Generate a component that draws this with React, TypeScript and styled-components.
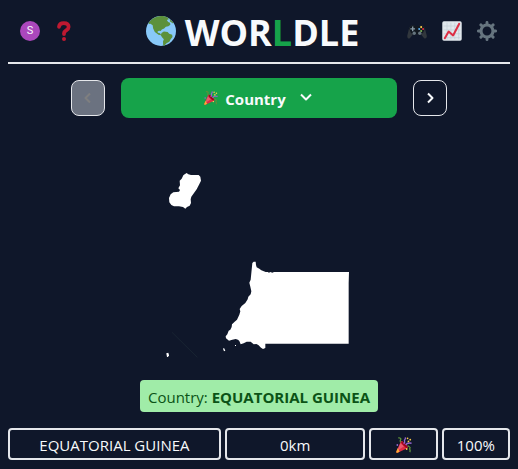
import React from "react";
import styled, { createGlobalStyle } from "styled-components";

const GlobalStyle = createGlobalStyle`
  *, *::before, *::after { box-sizing: border-box; }
  body {
    margin: 0;
    background: #0f172a;
    color: #f8fafc;
    font-family: "Open Sans", "Noto Sans", sans-serif;
    font-size: 15px;
    line-height: 24px;
  }
  button { font: inherit; color: inherit; cursor: pointer; }
`;

const Page = styled.div`
  display: flex;
  flex-direction: column;
  padding: 0 8px;
`;

const Header = styled.header`
  display: flex;
  align-items: center;
  justify-content: space-between;
  height: 64px;
  padding: 0 13px 0 12px;
  border-bottom: 2px solid #e5e7eb;
`;

const Tools = styled.nav<{ $gap: number }>`
  display: flex;
  align-items: center;
  gap: ${(p) => p.$gap}px;
`;

const IconButton = styled.button`
  display: flex;
  padding: 0;
  border: 0;
  background: none;
`;

const Avatar = styled.button`
  width: 20px;
  height: 20px;
  padding: 0;
  border: 0;
  border-radius: 50%;
  background: #ab47bc;
  font-family: Roboto, sans-serif;
  font-size: 11px;
  line-height: 20px;
  text-align: center;
`;

const Title = styled.h1`
  display: flex;
  align-items: center;
  gap: 9px;
  margin: 0 0 0 24px;
  font-size: 36px;
  line-height: 40px;
  font-weight: 700;
`;

const Wordmark = styled.span`
  padding-top: 4px;
`;

const Accent = styled.span`
  color: #16a34a;
`;

const Picker = styled.div`
  display: flex;
  align-items: center;
  align-self: center;
  gap: 16px;
  width: 75%;
  margin-top: 14px;
`;

const StepButton = styled.button`
  display: flex;
  align-items: center;
  justify-content: center;
  width: 34px;
  height: 36px;
  padding: 0;
  border: 1px solid #e5e7eb;
  border-radius: 8px;
  background: transparent;
  &:disabled {
    background: #6b7280;
    color: #7f7f7f;
    cursor: default;
  }
`;

const ModeButton = styled.button`
  display: flex;
  flex: 1;
  align-items: center;
  justify-content: center;
  height: 40px;
  padding: 0;
  border: 0;
  border-radius: 8px;
  background: #16a34a;
  font-weight: 700;
`;

const ModeName = styled.span`
  margin: 2px 12px 0 7px;
`;

const MapArea = styled.main`
  display: flex;
  justify-content: center;
  margin-top: 47px;
`;

const Answer = styled.p`
  align-self: center;
  margin: 15px 0 16px;
  padding: 5px 8px 3px;
  border-radius: 4px;
  background: #a0eca8;
  color: #0b5316;
  strong { font-weight: 700; }
`;

const GuessRow = styled.div`
  display: grid;
  grid-template-columns: repeat(7, 1fr);
  gap: 4px;
`;

const GuessCell = styled.div<{ $span?: number }>`
  display: flex;
  align-items: center;
  justify-content: center;
  grid-column: span ${(p) => p.$span ?? 1};
  height: 32px;
  padding-top: 2px;
  border: 2px solid #e5e7eb;
  border-radius: 4px;
  white-space: nowrap;
`;

const Globe = () => (
  <svg width="30" height="30" viewBox="0 0 36 36" aria-hidden="true">
    <circle cx="18" cy="18" r="18" fill="#88c9f9" />
    <path
      fill="#5c913b"
      d="M3.600 7.400C7 3 12 .4 18 0c3.200 0 6 .7 8.400 2l1 2-2.400.8 1.600 2.400 2.200 1 .4 2.200-2.400 1.800-3 .6-2 2.200-2.800 1.200-1.400 1.800-2-.2-1.800.7.4 1.700 2.600.6 1.600 2.400-3.400-.8-4.400-3.200-2-4.200-.6-4-2.600-1.600-2.400.2z"
    />
    <path
      fill="#5c913b"
      d="M18.600 20.400l2.800-1.800 4.600.6 1.800 2 3.600 1.400.4 2.600-2.200 2.800-1.600 3-3.400 1.800-2.600 3-1.400-.4-.2-4.800 1-2.600-2.200-2.600-1.400-2.400z"
    />
    <path fill="#5c913b" d="M28.200 4l2.800 1.900 2 2.600-1.400.2-2.600-2.300z" />
  </svg>
);

const Question = () => (
  <svg width="20" height="20" viewBox="0 0 36 36" aria-hidden="true">
    <path
      d="M9 10.500C9.500 6 12.500 3.800 17.500 3.800c5.500 0 8.800 2.700 8.800 6.800 0 6.600-8.300 6-8.300 11.600v1.300"
      fill="none"
      stroke="#be1931"
      strokeWidth="6.800"
      strokeLinecap="round"
    />
    <circle cx="18" cy="32.200" r="3.600" fill="#be1931" />
  </svg>
);

const Gamepad = () => (
  <svg width="20" height="20" viewBox="0 0 36 36" aria-hidden="true">
    <path
      fill="#31373d"
      d="M3 16c1-5 3-8 7-8 3 0 4 1 8 1s5-1 8-1c4 0 6 3 7 8l2.500 10c1 5-2.500 7-5 4.500L25 24H11l-5.500 6.500C3 33 0 31 .6 26z"
    />
    <path fill="#111820" d="M4 14c1-4 3-6 6-6 3 0 4 1 8 1s5-1 8-1c3 0 5 2 6 6l-3 7-7 5-4-3-4 3-7-5z" />
    <path fill="#8899a6" d="M9 10h2.500v3h3v2.500h-3v3H9v-3H6V13h3z" />
    <circle cx="13" cy="22" r="3" fill="#66757f" />
    <circle cx="23" cy="22" r="3" fill="#66757f" />
    <circle cx="25.500" cy="11" r="1.900" fill="#ffcc4d" />
    <circle cx="22" cy="14.500" r="1.900" fill="#55acee" />
    <circle cx="29" cy="14.500" r="1.900" fill="#dd2e44" />
    <circle cx="25.500" cy="18" r="1.900" fill="#78b159" />
  </svg>
);

const Chart = () => (
  <svg width="20" height="20" viewBox="0 0 36 36" aria-hidden="true">
    <rect x=".5" y=".5" width="35" height="35" rx="3" fill="#e1e8ed" />
    <path
      fill="none"
      stroke="#c3ced7"
      strokeWidth="1.200"
      d="M3 9h30M3 16h30M3 23h30M3 30h30M9 3v30M16 3v30M23 3v30M30 3v30"
    />
    <path
      d="M5 31l7-12 8 7L31 5"
      fill="none"
      stroke="#dd2e44"
      strokeWidth="3.600"
      strokeLinecap="round"
      strokeLinejoin="round"
    />
  </svg>
);

const Gear = () => (
  <svg width="20" height="20" viewBox="0 0 36 36" aria-hidden="true">
    <circle cx="18" cy="18" r="10.800" fill="none" stroke="#66757f" strokeWidth="5.600" />
    <path
      d="M18 6V2.500M18 33.500V30M6 18H2.500M33.500 18H30M9.500 9.500L7 7M29 29l-2.500-2.500M9.500 26.500L7 29M29 7l-2.500 2.500"
      stroke="#66757f"
      strokeWidth="5.200"
      strokeLinecap="round"
    />
  </svg>
);

const Popper = ({ size }: { size: number }) => (
  <svg width={size} height={size} viewBox="0 0 36 36" aria-hidden="true">
    <path fill="#dd2e44" d="M11 9.500L.8 32.500c-.8 2 .8 3.500 2.700 2.700L26.500 25C29 22 15 7 11 9.500z" />
    <path fill="#ea596e" d="M10 14L3 31l15-10z" />
    <path fill="#a0041e" d="M12 10c4-1 15 10 14 14-2 2-5-1-8-4s-8-8-6-10z" />
    <path fill="#ffac33" d="M4 25L.8 32.500c-.8 2 .8 3.500 2.700 2.700L8 33z" />
    <path
      d="M5 2c5-1 7 2 5 5-1 2-1 3 1 5M26 20c4 0 4 4 7 4M32 24c-4 3 2 5-1 10"
      fill="none"
      stroke="#5c913b"
      strokeWidth="3"
    />
    <path
      d="M17 15c5-2 2-5 2-7s3-2 2-7M22 18c2-5 7-5 13-4"
      fill="none"
      stroke="#9266cc"
      strokeWidth="3"
    />
    <g fill="#ffcc4d">
      <circle cx="26" cy="3" r="2" />
      <circle cx="32" cy="6" r="2" />
      <circle cx="28" cy="10" r="2" />
      <circle cx="24" cy="27" r="2" />
    </g>
    <circle cx="3" cy="18" r="2" fill="#9266cc" />
  </svg>
);

const Chevron = ({ d }: { d: string }) => (
  <svg
    width="16"
    height="16"
    viewBox="0 0 16 16"
    fill="none"
    stroke="currentColor"
    strokeWidth="2"
    strokeLinejoin="round"
    aria-hidden="true"
  >
    <path d={d} />
  </svg>
);

const CountryShape = () => (
  <svg width="208" height="200" viewBox="0 0 624 600" role="img" aria-label="Country outline">
    <g fill="#fff">
      <path d="M89 28l6-4 5 4 8 2 23 0 5 5 2 12-6 12-7 14-8 11-8 11-2 8 1 11-4 8-8 4-5 5-7-5-12-2-15 0-8-4-6-8-1-13 5-11 8-6 17-2 3-5-5-5 5-9-1-14 6-6 5-10z" />
      <path d="M292 294l4-4h6l1 10 2 7 8 4 6 5 13 5h6l4 2 4-2 6 2 5-2h225l-1 34v181H331v13l-7 3-6-4-8-8-6-3-8 1-9-8-12 0-9 5-9 3-4-10-4-4-7-2-10 2-10 3-9-7-1-6 5-6 4-11 5-3 4-8 1-8 8-8 7-6 7-15 3-10-2-7 6-9 11-9 7-11 2-8 7-7 2-9-3-14-3-12 4-9z" />
      <path d="M34 565l6-2 2 8-3 5h-3z" />
      <path d="M204 551l3-2 2 4 2 4-4 2z" />
      <path d="M240 540h3v3h-3z" />
    </g>
    <path d="M51 502l76 75" stroke="#1c2b36" strokeWidth="2" />
  </svg>
);

export default function App() {
  return (
    <>
      <GlobalStyle />
      <Page>
        <Header>
          <Tools $gap={14}>
            <Avatar aria-label="Account">S</Avatar>
            <IconButton aria-label="How to play">
              <Question />
            </IconButton>
          </Tools>
          <Title>
            <Globe />
            <Wordmark>
              WOR<Accent>L</Accent>DLE
            </Wordmark>
          </Title>
          <Tools $gap={15}>
            <IconButton aria-label="Games">
              <Gamepad />
            </IconButton>
            <IconButton aria-label="Statistics">
              <Chart />
            </IconButton>
            <IconButton aria-label="Settings">
              <Gear />
            </IconButton>
          </Tools>
        </Header>

        <Picker>
          <StepButton aria-label="Previous round" disabled>
            <Chevron d="M10 3.500L5.500 8L10 12.500" />
          </StepButton>
          <ModeButton>
            <Popper size={14} />
            <ModeName>Country</ModeName>
            <Chevron d="M3 4.500L8 9.500L13 4.500" />
          </ModeButton>
          <StepButton aria-label="Next round">
            <Chevron d="M6 3.500L10.500 8L6 12.500" />
          </StepButton>
        </Picker>

        <MapArea>
          <CountryShape />
        </MapArea>

        <Answer>
          Country: <strong>EQUATORIAL GUINEA</strong>
        </Answer>

        <GuessRow>
          <GuessCell $span={3}>EQUATORIAL GUINEA</GuessCell>
          <GuessCell $span={2}>0km</GuessCell>
          <GuessCell>
            <Popper size={16} />
          </GuessCell>
          <GuessCell>100%</GuessCell>
        </GuessRow>
      </Page>
    </>
  );
}
